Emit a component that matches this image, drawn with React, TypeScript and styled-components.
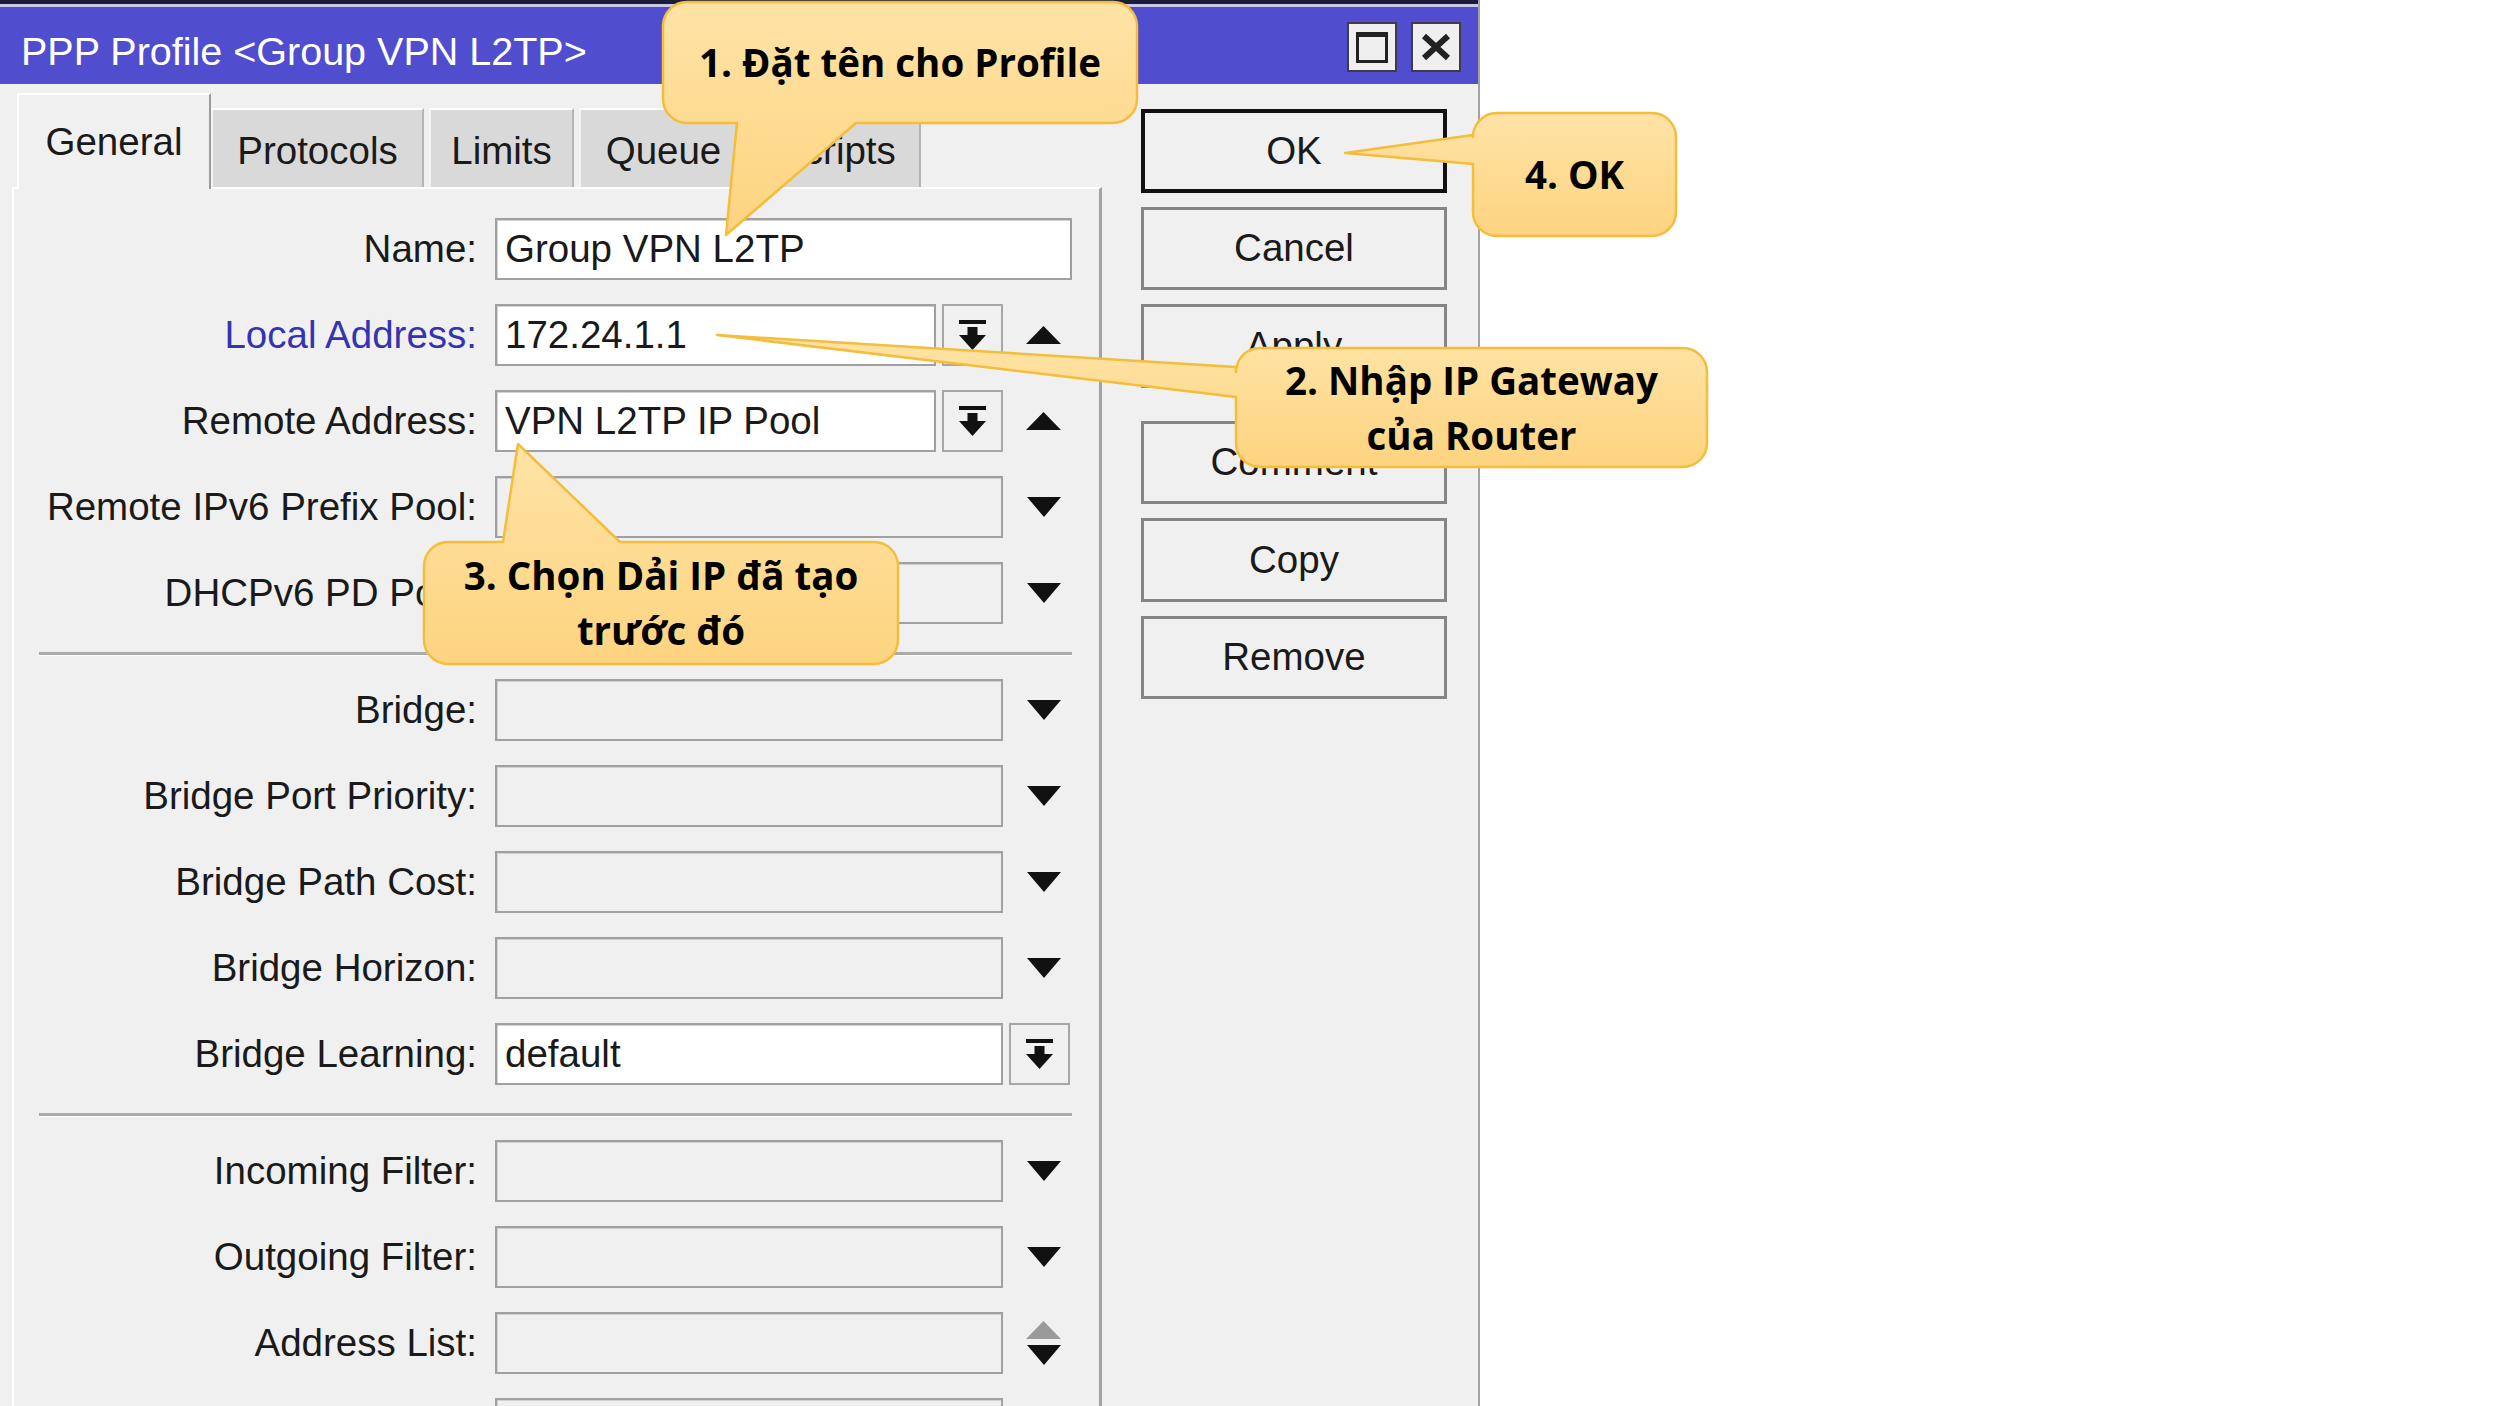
import React from "react";
import styled, { createGlobalStyle } from "styled-components";

const UI_FONT = `"Liberation Sans", Arial, sans-serif`;
const UI_SIZE = "38.5px";

const GlobalStyle = createGlobalStyle`
  html, body { margin: 0; padding: 0; background: #ffffff; }
  body { font-family: ${UI_FONT}; }
  #root { width: 2500px; height: 1406px; }
`;

const Page = styled.div`
  position: relative;
  width: 2500px;
  height: 1406px;
  overflow: hidden;
  background: #ffffff;
`;

const Window = styled.div`
  width: 1480px;
  height: 1406px;
  box-sizing: border-box;
  background: #f0f0f0;
  border-right: 2px solid #a2a2a2;
  display: flex;
  flex-direction: column;
`;

const TitleBar = styled.div`
  height: 84px;
  flex-shrink: 0;
  box-sizing: border-box;
  border-top: 4px solid #1d1d3b;
  background: linear-gradient(to bottom, #c9c9ec 0, #c9c9ec 3px, #504ecf 3px);
  padding: 6px 17px 0 21px;
  display: flex;
  align-items: center;
`;

const TitleText = styled.div`
  flex: 1;
  margin-top: 8px;
  color: #ffffff;
  font-size: 39.5px;
  white-space: nowrap;
`;

const TitleButtons = styled.div`
  display: flex;
  gap: 14px;
`;

const TitleButton = styled.div`
  width: 50px;
  height: 50px;
  box-sizing: border-box;
  background: #efefef;
  border: 2px solid #3c3c4c;
  display: flex;
  align-items: center;
  justify-content: center;
`;

const MaxIcon = styled.div`
  width: 32px;
  height: 31px;
  box-sizing: border-box;
  border: 3px solid #222;
  border-top-width: 5px;
`;

const Body = styled.div`
  flex: 1;
  min-height: 0;
  display: flex;
`;

const LeftPane = styled.div`
  width: 1102px;
  flex-shrink: 0;
  box-sizing: border-box;
  padding-left: 12px;
  display: flex;
  flex-direction: column;
`;

const TabStrip = styled.div`
  height: 94px;
  margin-top: 9px;
  padding-left: 5px;
  display: flex;
  align-items: flex-end;
  position: relative;
  z-index: 1;
  flex-shrink: 0;
`;

const Tab = styled.div<{ $active?: boolean; $w: number; $gap: number }>`
  width: ${(p) => p.$w}px;
  height: ${(p) => (p.$active ? 96 : 79)}px;
  margin-bottom: ${(p) => (p.$active ? -2 : 0)}px;
  margin-left: ${(p) => p.$gap}px;
  box-sizing: border-box;
  background: ${(p) => (p.$active ? "#f0f0f0" : "#d9d9d9")};
  border-top: 2px solid #ffffff;
  border-left: 2px solid ${(p) => (p.$active ? "#ffffff" : "#f4f4f4")};
  border-right: 2px solid ${(p) => (p.$active ? "#9a9a9a" : "#b4b4b4")};
  padding-top: ${(p) => (p.$active ? 0 : 4)}px;
  display: flex;
  align-items: center;
  justify-content: center;
  font-size: ${UI_SIZE};
  color: #1a1a1a;
  white-space: nowrap;
  overflow: hidden;
`;

const Panel = styled.div`
  flex: 1;
  box-sizing: border-box;
  border-top: 2px solid #ffffff;
  border-left: 2px solid #ffffff;
  border-right: 3px solid #a3a3a3;
  padding: 29px 27px 0 25px;
  overflow: hidden;
`;

const Form = styled.div`
  display: flex;
  flex-direction: column;
  gap: 24px;
`;

const Row = styled.div`
  display: flex;
  align-items: center;
  height: 62px;
  flex-shrink: 0;
`;

const Label = styled.div<{ $blue?: boolean }>`
  width: 438px;
  margin-right: 18px;
  flex-shrink: 0;
  text-align: right;
  font-size: ${UI_SIZE};
  white-space: nowrap;
  color: ${(p) => (p.$blue ? "#3434b2" : "#1a1a1a")};
`;

const FieldBox = styled.div<{ $w: number; $filled?: boolean }>`
  width: ${(p) => p.$w}px;
  height: 62px;
  flex-shrink: 0;
  box-sizing: border-box;
  border: 2px solid #a0a0a0;
  box-shadow: inset 1px 1px 0 #d2d2d2;
  background: ${(p) => (p.$filled ? "#ffffff" : "#f0f0f0")};
  padding-left: 8px;
  display: flex;
  align-items: center;
  font-size: ${UI_SIZE};
  color: #1a1a1a;
  white-space: nowrap;
  overflow: hidden;
`;

const PickButton = styled.div`
  width: 61px;
  height: 62px;
  margin-left: 6px;
  flex-shrink: 0;
  box-sizing: border-box;
  border: 2px solid #a6a6a6;
  background: #f0f0f0;
  display: flex;
  align-items: center;
  justify-content: center;
`;

const ArrowSlot = styled.div`
  width: 35px;
  margin-left: 23px;
  display: flex;
  flex-direction: column;
  align-items: center;
  gap: 6px;
`;

const Separator = styled.div`
  height: 3px;
  margin-top: 4px;
  flex-shrink: 0;
  background: #ababab;
  box-shadow: 0 1px 0 #ffffff;
`;

const RightPane = styled.div`
  padding: 25px 0 0 39px;
  display: flex;
  flex-direction: column;
  gap: 14px;
`;

const ActionButton = styled.div<{ $primary?: boolean; $spaced?: boolean }>`
  width: 306px;
  height: 83.5px;
  box-sizing: border-box;
  border: ${(p) => (p.$primary ? "4px solid #111111" : "3px solid #858585")};
  background: #f0f0f0;
  margin-top: ${(p) => (p.$spaced ? 19 : 0)}px;
  display: flex;
  align-items: center;
  justify-content: center;
  font-size: ${UI_SIZE};
  color: #1a1a1a;
`;

const Overlay = styled.div`
  position: absolute;
  inset: 0;
  z-index: 10;
  pointer-events: none;
`;

const CalloutSvg = styled.svg`
  position: absolute;
  left: 0;
  top: 0;
`;

const CalloutText = styled.div<{ $x: number; $y: number; $w: number; $h: number }>`
  position: absolute;
  left: ${(p) => p.$x}px;
  top: ${(p) => p.$y}px;
  width: ${(p) => p.$w}px;
  height: ${(p) => p.$h}px;
  display: flex;
  align-items: center;
  justify-content: center;
  text-align: center;
  font-family: "Open Sans", "Noto Sans", sans-serif;
  font-weight: 700;
  font-size: 38.5px;
  line-height: 55px;
  color: #000000;
`;

const PickIcon = () => (
  <svg width="27" height="30" viewBox="0 0 27 30">
    <rect x="0" y="0" width="27" height="4" fill="#111" />
    <rect x="8.5" y="7" width="10" height="9" fill="#111" />
    <polygon points="0,15 27,15 13.5,30" fill="#111" />
  </svg>
);

const Down = ({ color = "#111" }: { color?: string }) => (
  <svg width="34" height="20" viewBox="0 0 34 20">
    <polygon points="0,0 34,0 17,20" fill={color} />
  </svg>
);

const Up = ({ color = "#111" }: { color?: string }) => (
  <svg width="35" height="18" viewBox="0 0 35 18">
    <polygon points="0,18 35,18 17.5,0" fill={color} />
  </svg>
);

type Kind = "text" | "pickUp" | "drop" | "pick" | "updown";
type FieldRow = { label: string; kind: Kind; value?: string; blue?: boolean };

const Field = ({ row }: { row: FieldRow }) => {
  const { label, kind, value, blue } = row;
  return (
    <Row>
      <Label $blue={blue}>{label}</Label>
      {kind === "text" && <FieldBox $w={577} $filled>{value}</FieldBox>}
      {kind === "pickUp" && (
        <>
          <FieldBox $w={441} $filled>{value}</FieldBox>
          <PickButton><PickIcon /></PickButton>
          <ArrowSlot><Up /></ArrowSlot>
        </>
      )}
      {kind === "drop" && (
        <>
          <FieldBox $w={508} />
          <ArrowSlot><Down /></ArrowSlot>
        </>
      )}
      {kind === "pick" && (
        <>
          <FieldBox $w={508} $filled>{value}</FieldBox>
          <PickButton><PickIcon /></PickButton>
        </>
      )}
      {kind === "updown" && (
        <>
          <FieldBox $w={508} />
          <ArrowSlot>
            <Up color="#9a9a9a" />
            <Down />
          </ArrowSlot>
        </>
      )}
    </Row>
  );
};

const group1: FieldRow[] = [
  { label: "Name:", kind: "text", value: "Group VPN L2TP" },
  { label: "Local Address:", kind: "pickUp", value: "172.24.1.1", blue: true },
  { label: "Remote Address:", kind: "pickUp", value: "VPN L2TP IP Pool" },
  { label: "Remote IPv6 Prefix Pool:", kind: "drop" },
  { label: "DHCPv6 PD Pool:", kind: "drop" },
];
const group2: FieldRow[] = [
  { label: "Bridge:", kind: "drop" },
  { label: "Bridge Port Priority:", kind: "drop" },
  { label: "Bridge Path Cost:", kind: "drop" },
  { label: "Bridge Horizon:", kind: "drop" },
  { label: "Bridge Learning:", kind: "pick", value: "default" },
];
const group3: FieldRow[] = [
  { label: "Incoming Filter:", kind: "drop" },
  { label: "Outgoing Filter:", kind: "drop" },
  { label: "Address List:", kind: "updown" },
  { label: "Interface List:", kind: "drop" },
];

const tabs = [
  { name: "General", w: 194, gap: 0, active: true },
  { name: "Protocols", w: 213, gap: 0 },
  { name: "Limits", w: 145, gap: 5 },
  { name: "Queue", w: 169, gap: 5 },
  { name: "Scripts", w: 168, gap: 5 },
];

const actions = [
  { name: "OK", primary: true },
  { name: "Cancel" },
  { name: "Apply" },
  { name: "Comment", spaced: true },
  { name: "Copy" },
  { name: "Remove" },
];

const callouts = [
  {
    path: "M687,2 H1113 A24,24 0 0 1 1137,26 V99 A24,24 0 0 1 1113,123 H856 L726,235 L737,123 H687 A24,24 0 0 1 663,99 V26 A24,24 0 0 1 687,2 Z",
    box: { x: 663, y: 2, w: 474, h: 121 },
    lines: ["1. Đặt tên cho Profile"],
  },
  {
    path: "M1260,348 H1683 A24,24 0 0 1 1707,372 V443 A24,24 0 0 1 1683,467 H1260 A24,24 0 0 1 1236,443 V397 L717,335 L1236,367 V372 A24,24 0 0 1 1260,348 Z",
    box: { x: 1236, y: 348, w: 471, h: 119 },
    lines: ["2. Nhập IP Gateway", "của Router"],
  },
  {
    path: "M448,542 H503 L518,444 L620,542 H874 A24,24 0 0 1 898,566 V640 A24,24 0 0 1 874,664 H448 A24,24 0 0 1 424,640 V566 A24,24 0 0 1 448,542 Z",
    box: { x: 424, y: 542, w: 474, h: 122 },
    lines: ["3. Chọn Dải IP đã tạo", "trước đó"],
  },
  {
    path: "M1497,113 H1652 A24,24 0 0 1 1676,137 V212 A24,24 0 0 1 1652,236 H1497 A24,24 0 0 1 1473,212 V164 L1345,153 L1473,135 V137 A24,24 0 0 1 1497,113 Z",
    box: { x: 1473, y: 113, w: 203, h: 123 },
    lines: ["4. OK"],
  },
];

export default function App() {
  return (
    <Page>
      <GlobalStyle />
      <Window>
        <TitleBar>
          <TitleText>PPP Profile &lt;Group VPN L2TP&gt;</TitleText>
          <TitleButtons>
            <TitleButton><MaxIcon /></TitleButton>
            <TitleButton>
              <svg width="30" height="28" viewBox="0 0 30 28">
                <path d="M3,3 L27,25 M27,3 L3,25" stroke="#222" strokeWidth="6" />
              </svg>
            </TitleButton>
          </TitleButtons>
        </TitleBar>
        <Body>
          <LeftPane>
            <TabStrip>
              {tabs.map((t) => (
                <Tab key={t.name} $active={t.active} $w={t.w} $gap={t.gap}>
                  {t.name}
                </Tab>
              ))}
            </TabStrip>
            <Panel>
              <Form>
                {group1.map((r) => <Field key={r.label} row={r} />)}
                <Separator />
                {group2.map((r) => <Field key={r.label} row={r} />)}
                <Separator />
                {group3.map((r) => <Field key={r.label} row={r} />)}
              </Form>
            </Panel>
          </LeftPane>
          <RightPane>
            {actions.map((a) => (
              <ActionButton key={a.name} $primary={a.primary} $spaced={a.spaced}>
                {a.name}
              </ActionButton>
            ))}
          </RightPane>
        </Body>
      </Window>
      <Overlay>
        <CalloutSvg width="2500" height="1406" viewBox="0 0 2500 1406">
          <defs>
            <linearGradient id="calloutFill" x1="0" y1="0" x2="0" y2="1">
              <stop offset="0" stopColor="#ffe3a6" />
              <stop offset="1" stopColor="#fdd480" />
            </linearGradient>
          </defs>
          {callouts.map((c, i) => (
            <path key={i} d={c.path} fill="url(#calloutFill)" stroke="#f4bd3c" strokeWidth="2.5" strokeLinejoin="round" />
          ))}
        </CalloutSvg>
        {callouts.map((c, i) => (
          <CalloutText key={i} $x={c.box.x} $y={c.box.y} $w={c.box.w} $h={c.box.h}>
            <div>
              {c.lines.map((l, j) => (
                <div key={j}>{l}</div>
              ))}
            </div>
          </CalloutText>
        ))}
      </Overlay>
    </Page>
  );
}
